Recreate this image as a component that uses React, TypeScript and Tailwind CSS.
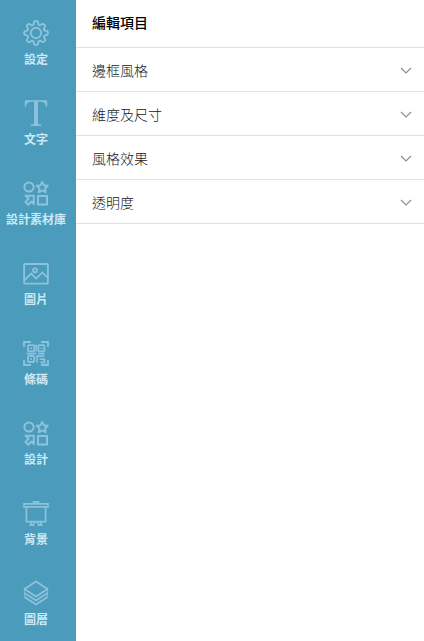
import React, { useState } from "react";
import { BsFonts } from "react-icons/bs";

interface IconProps {
  children: React.ReactNode;
  viewBox?: string;
  strokeWidth?: number;
}

const Icon: React.FC<IconProps> = ({ children, viewBox = "0 0 26 26", strokeWidth = 2 }) => (
  <svg
    className="size-[26px] text-[#8cc2da]"
    viewBox={viewBox}
    fill="none"
    stroke="currentColor"
    strokeWidth={strokeWidth}
    aria-hidden="true"
  >
    {children}
  </svg>
);

const GearIcon = () => (
  <Icon viewBox="0 0 24 24" strokeWidth={1.8}>
    <circle cx="12" cy="12" r="4.8" />
    <path d="M19.4 15a1.65 1.65 0 0 0 .33 1.82l.06.06a2 2 0 0 1 0 2.83 2 2 0 0 1-2.83 0l-.06-.06a1.65 1.65 0 0 0-1.82-.33 1.65 1.65 0 0 0-1 1.51V21a2 2 0 0 1-2 2 2 2 0 0 1-2-2v-.09A1.65 1.65 0 0 0 9 19.4a1.65 1.65 0 0 0-1.82.33l-.06.06a2 2 0 0 1-2.83 0 2 2 0 0 1 0-2.83l.06-.06a1.65 1.65 0 0 0 .33-1.82 1.65 1.65 0 0 0-1.51-1H3a2 2 0 0 1-2-2 2 2 0 0 1 2-2h.09A1.65 1.65 0 0 0 4.6 9a1.65 1.65 0 0 0-.33-1.82l-.06-.06a2 2 0 0 1 0-2.83 2 2 0 0 1 2.83 0l.06.06a1.65 1.65 0 0 0 1.82.33H9a1.65 1.65 0 0 0 1-1.51V3a2 2 0 0 1 2-2 2 2 0 0 1 2 2v.09a1.65 1.65 0 0 0 1 1.51 1.65 1.65 0 0 0 1.82-.33l.06-.06a2 2 0 0 1 2.83 0 2 2 0 0 1 0 2.83l-.06.06a1.65 1.65 0 0 0-.33 1.82V9a1.65 1.65 0 0 0 1.51 1H21a2 2 0 0 1 2 2 2 2 0 0 1-2 2h-.09a1.65 1.65 0 0 0-1.51 1z" />
  </Icon>
);

const TextIcon = () => (
  <BsFonts className="size-[26px] text-[#8cc2da]" viewBox="3.2 2.9 9.6 10" aria-hidden="true" />
);

const ShapesIcon = () => (
  <Icon>
    <circle cx="6" cy="7" r="4.6" />
    <path
      d="M19.2 1.9l1.7 3.4 3.8.5-2.8 2.6.7 3.8-3.4-1.8-3.4 1.8.7-3.8-2.8-2.6 3.8-.5z"
      strokeLinejoin="round"
    />
    <rect x="15" y="16" width="9" height="8.5" />
    <path d="M2.6 15.8h8.2v8.2l-2.5-2.5-3.1 3.3-2.8-2.8 3.2-3.2z" strokeLinejoin="round" />
  </Icon>
);

const PictureIcon = () => (
  <Icon strokeWidth={1.8}>
    <rect x="1.1" y="4" width="23.8" height="19.6" rx="0.6" />
    <circle cx="12" cy="10.3" r="2" />
    <path d="M1.6 20.2l6.6-6.6 5 5 6.2-6.2 5.2 5.2" />
  </Icon>
);

const BarcodeIcon = () => (
  <Icon strokeWidth={1.8}>
    <path d="M1 7V2h7M18 2h7v5M1 20v5h7M18 25h7v-5" />
    <rect x="5" y="5.2" width="6.2" height="6.2" rx="1" />
    <rect x="15.4" y="5.2" width="6" height="6.2" rx="1" />
    <rect x="5" y="16" width="6.2" height="6" rx="1" />
    <path d="M7.4 8.3h1.6M17.6 8.3h1.6M7.4 19h1.6M13.3 4.5v7M3.6 13.6h9.6M15 13.6h6.8M14 22.4v-6.2h7.4M16.6 19.2h4.8v3.2h-4" />
  </Icon>
);

const BoardIcon = () => (
  <Icon strokeWidth={1.7}>
    <path d="M10.6 3.6V1.8h4.8v1.8M1 3.8h24v3H1zM3.4 6.8v14.8h19.2V6.8" />
    <path d="M8.6 21.6l-1.2 3.6h3l1.2-3.6M14.4 21.6l1.2 3.6h3l-1.2-3.6" />
  </Icon>
);

const LayersIcon = () => (
  <Icon strokeWidth={1.8}>
    <path d="M13 1.6l11.6 7.4L13 16.4 1.4 9z" strokeLinejoin="round" />
    <path d="M1.4 13L13 20.4 24.6 13M1.4 17L13 24.4 24.6 17" strokeLinejoin="round" />
    <path d="M1.4 9v8M24.6 9v8" strokeWidth="0.8" />
  </Icon>
);

const tools = [
  { id: "settings", label: "設定", icon: <GearIcon /> },
  { id: "text", label: "文字", icon: <TextIcon /> },
  { id: "assets", label: "設計素材庫", icon: <ShapesIcon /> },
  { id: "image", label: "圖片", icon: <PictureIcon /> },
  { id: "barcode", label: "條碼", icon: <BarcodeIcon /> },
  { id: "design", label: "設計", icon: <ShapesIcon /> },
  { id: "background", label: "背景", icon: <BoardIcon /> },
  { id: "layers", label: "圖層", icon: <LayersIcon /> },
];

const sections = ["邊框風格", "維度及尺寸", "風格效果", "透明度"];

const Section: React.FC<{ title: string }> = ({ title }) => {
  const [open, setOpen] = useState(false);

  return (
    <button
      type="button"
      aria-expanded={open}
      onClick={() => setOpen(!open)}
      className="flex h-11 w-full items-center justify-between border-b border-[#d9e2e6] pr-3 pl-4 text-left text-sm leading-5 font-light text-[#111827]"
    >
      {title}
      <svg
        className={open ? "size-3 rotate-180" : "size-3"}
        viewBox="0 0 12 12"
        fill="none"
        stroke="#8a8a8a"
        strokeWidth="1.1"
        aria-hidden="true"
      >
        <path d="M1 4l5 5 5-5" />
      </svg>
    </button>
  );
};

const App: React.FC = () => {
  return (
    <div className="flex min-h-screen bg-white font-['Noto_Sans_CJK_TC',sans-serif]">
      <nav className="w-19 shrink-0 bg-[#4b9cbc] pr-1">
        {tools.map((tool) => (
          <button
            key={tool.id}
            type="button"
            className="flex h-20 w-full flex-col items-center gap-[5px] pt-5 text-xs font-bold whitespace-nowrap text-[#cde8f4]"
          >
            {tool.icon}
            {tool.label}
          </button>
        ))}
      </nav>
      <main className="min-w-0 flex-1">
        <h2 className="h-12 border-b border-[#d9e2e6] px-4 pt-3 text-sm leading-5 font-medium text-black">
          編輯項目
        </h2>
        {sections.map((title) => (
          <Section key={title} title={title} />
        ))}
      </main>
    </div>
  );
};

export default App;
